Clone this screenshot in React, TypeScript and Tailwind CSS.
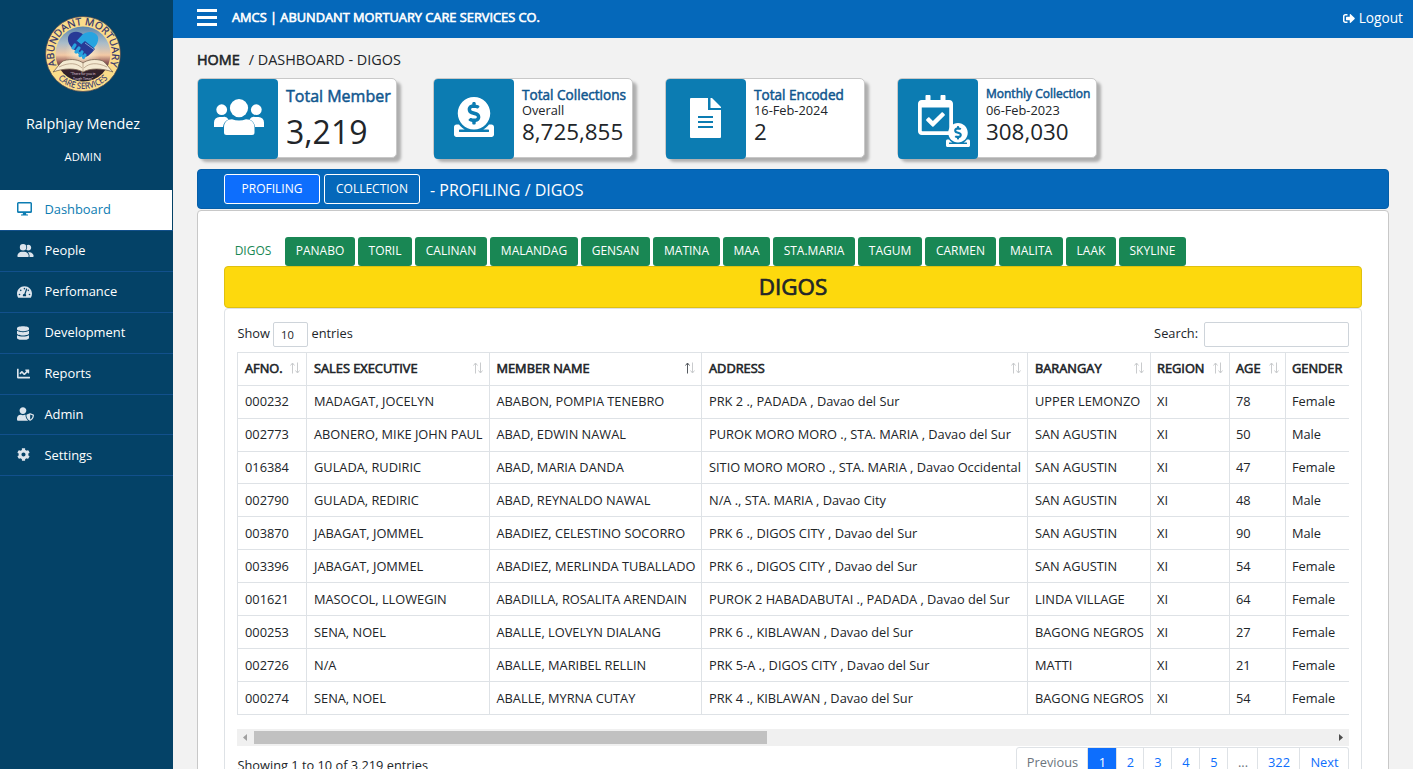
import React from "react";
import {
  FaChartLine,
  FaCog,
  FaDatabase,
  FaDonate,
  FaRegCalendarCheck,
  FaSignOutAlt,
  FaTachometerAlt,
  FaUserShield,
} from "react-icons/fa";
import { FaUserGroup } from "react-icons/fa6";

const nav = [
  { label: "People", icon: <FaUserGroup className="h-[13px] w-[17px]" />, h: "h-[41px]", pad: "pb-[3px]" },
  { label: "Perfomance", icon: <FaTachometerAlt className="h-[14px] w-[15px]" />, h: "h-[41px]", pad: "pb-[3px]" },
  { label: "Development", icon: <FaDatabase className="h-[14px] w-[12px]" />, h: "h-[41px]", pad: "pb-[3px]" },
  { label: "Reports", icon: <FaChartLine className="h-[13px] w-[13px]" />, h: "h-[41px]", pad: "pb-[3px]" },
  { label: "Admin", icon: <FaUserShield className="h-[14px] w-[17px]" />, h: "h-[40px]", pad: "pb-px" },
  { label: "Settings", icon: <FaCog className="h-[13px] w-[13px]" />, h: "h-[41px]", pad: "pb-px" },
];

const tabs: [string, string][] = [
  ["PANABO", "w-[70px]"],
  ["TORIL", "w-[54px]"],
  ["CALINAN", "w-[72px]"],
  ["MALANDAG", "w-[88px]"],
  ["GENSAN", "w-[69px]"],
  ["MATINA", "w-[67px]"],
  ["MAA", "w-[47px]"],
  ["STA.MARIA", "w-[82px]"],
  ["TAGUM", "w-[64px]"],
  ["CARMEN", "w-[71px]"],
  ["MALITA", "w-[64px]"],
  ["LAAK", "w-[50px]"],
  ["SKYLINE", "w-[67px]"],
];

const columns: [string, string][] = [
  ["AFNO.", "w-[69px] pl-[7px]"],
  ["SALES EXECUTIVE", "w-[183px] pl-[7px]"],
  ["MEMBER NAME", "w-[212px] pl-[6.5px]"],
  ["ADDRESS", "w-[326px] pl-[7px]"],
  ["BARANGAY", "w-[123px] pl-[7px]"],
  ["REGION", "w-[79px] pl-[6px]"],
  ["AGE", "w-[56px] pl-[6px]"],
  ["GENDER", "w-[80px] pl-[6px]"],
];

const rows = [
  ["000232", "MADAGAT, JOCELYN", "ABABON, POMPIA TENEBRO", "PRK 2 ., PADADA , Davao del Sur", "UPPER LEMONZO", "XI", "78", "Female"],
  ["002773", "ABONERO, MIKE JOHN PAUL", "ABAD, EDWIN NAWAL", "PUROK MORO MORO ., STA. MARIA , Davao del Sur", "SAN AGUSTIN", "XI", "50", "Male"],
  ["016384", "GULADA, RUDIRIC", "ABAD, MARIA DANDA", "SITIO MORO MORO ., STA. MARIA , Davao Occidental", "SAN AGUSTIN", "XI", "47", "Female"],
  ["002790", "GULADA, REDIRIC", "ABAD, REYNALDO NAWAL", "N/A ., STA. MARIA , Davao City", "SAN AGUSTIN", "XI", "48", "Male"],
  ["003870", "JABAGAT, JOMMEL", "ABADIEZ, CELESTINO SOCORRO", "PRK 6 ., DIGOS CITY , Davao del Sur", "SAN AGUSTIN", "XI", "90", "Male"],
  ["003396", "JABAGAT, JOMMEL", "ABADIEZ, MERLINDA TUBALLADO", "PRK 6 ., DIGOS CITY , Davao del Sur", "SAN AGUSTIN", "XI", "54", "Female"],
  ["001621", "MASOCOL, LLOWEGIN", "ABADILLA, ROSALITA ARENDAIN", "PUROK 2 HABADABUTAI ., PADADA , Davao del Sur", "LINDA VILLAGE", "XI", "64", "Female"],
  ["000253", "SENA, NOEL", "ABALLE, LOVELYN DIALANG", "PRK 6 ., KIBLAWAN , Davao del Sur", "BAGONG NEGROS", "XI", "27", "Female"],
  ["002726", "N/A", "ABALLE, MARIBEL RELLIN", "PRK 5-A ., DIGOS CITY , Davao del Sur", "MATTI", "XI", "21", "Female"],
  ["000274", "SENA, NOEL", "ABALLE, MYRNA CUTAY", "PRK 4 ., KIBLAWAN , Davao del Sur", "BAGONG NEGROS", "XI", "54", "Female"],
];

const rowSize = (i: number) => (i < 2 ? "h-[33px] pb-[3px]" : i === 2 ? "h-[32px] pb-[2px]" : "h-[33px] pb-px");

const pages: [string, string][] = [
  ["Previous", "w-[72px] rounded-l-[3px] border-l text-[#6c757d]"],
  ["1", "w-[29px] bg-[#0d6efd] border-[#0d6efd] text-white"],
  ["2", "w-[27px] text-[#0d6efd]"],
  ["3", "w-[28px] text-[#0d6efd]"],
  ["4", "w-[28px] text-[#0d6efd]"],
  ["5", "w-[28px] text-[#0d6efd]"],
  ["...", "w-[30px] text-[#6c757d]"],
  ["322", "w-[42px] text-[#0d6efd]"],
  ["Next", "w-[49px] rounded-r-[3px] text-[#0d6efd]"],
];

function Logo() {
  return (
    <svg viewBox="0 0 76 76" className="h-[76px] w-[76px]">
      <defs>
        <linearGradient id="sky" x1="0" y1="0" x2="0" y2="1">
          <stop offset="0" stopColor="#5c86ad" />
          <stop offset="0.3" stopColor="#a9bcc9" />
          <stop offset="0.52" stopColor="#f3c9a5" />
          <stop offset="0.64" stopColor="#9b6560" />
          <stop offset="0.78" stopColor="#38222b" />
          <stop offset="1" stopColor="#201d2b" />
        </linearGradient>
        <radialGradient id="glow">
          <stop offset="0" stopColor="#fff3cf" />
          <stop offset="1" stopColor="#fff3cf" stopOpacity="0" />
        </radialGradient>
        <path id="arcTop" d="M11.7 50.3 A29 29 0 1 1 64.3 50.3" />
        <path id="arcBottom" d="M7.7 55.5 A35 35 0 0 0 68.3 55.5" />
      </defs>
      <circle cx="38" cy="38" r="37.5" fill="#fbdc8a" stroke="#4a4652" strokeWidth="0.8" />
      <circle cx="38" cy="38" r="27.5" fill="url(#sky)" />
      <circle cx="38" cy="37" r="18" fill="url(#glow)" />
      <text fill="#2b2e6b" fontFamily="Open Sans" fontSize="10" stroke="#2b2e6b" strokeWidth="0.2">
        <textPath href="#arcTop" startOffset="50%" textAnchor="middle" textLength="114" lengthAdjust="spacingAndGlyphs">ABUNDANT MORTUARY</textPath>
      </text>
      <text fill="#2b2e6b" fontFamily="Open Sans" fontSize="8.6" stroke="#2b2e6b" strokeWidth="0.1">
        <textPath href="#arcBottom" startOffset="50%" textAnchor="middle" textLength="55" lengthAdjust="spacingAndGlyphs">CARE SERVICES</textPath>
      </text>
      <path d="M38 18.5 C34 14.5 26 15 23.5 20 C21.5 25 25 30 28 33 L39 40 L44 35 Z" fill="#273a96" />
      <path d="M37.5 18.5 C42 14.5 51 15 53 21 C54 26 51 30 47 34 L38 42 L31 36 L36 28 L31.5 25 Z" fill="#27a4e0" />
      <path d="M32 25 L36 28.5 L40 25 L50 33 L47 36.5 L43 40 L40.5 41 L31 33 Z" fill="#273a96" />
      <g stroke="#27a4e0" strokeWidth="3.2" strokeLinecap="round">
        <path d="M28 32 L30 29 M31 36 L34 32 M35 39.5 L37 36 M38.5 41.5 L40 39" />
      </g>
      <path d="M40 27 L49 33.5" stroke="#bfe6fa" strokeWidth="0.6" />
      <path d="M8 56 C12 52 14 48 18 45 C27 42 34 44 38 47 C42 44 50 42 58 45 C62 48 64 52 68 56 C57 52 45 52 38 56 C31 52 19 52 8 56 Z" fill="#f4ead2" stroke="#77624f" strokeWidth="0.8" />
      <path d="M38 47 V55 M14 51 C24 46 32 47 37 52 M62 51 C52 46 44 47 39 52" fill="none" stroke="#9c8166" strokeWidth="0.6" />
      <text x="38" y="59.4" textAnchor="middle" fill="#e9dfe0" fontFamily="Open Sans" fontSize="3.2">"There for you in</text>
      <text x="38" y="63.8" textAnchor="middle" fill="#e9dfe0" fontFamily="Open Sans" fontSize="3.2">Tough Times"</text>
    </svg>
  );
}

function MonitorIcon() {
  return (
    <svg viewBox="0 0 15 14" className="h-[14px] w-[15px]" fill="currentColor">
      <path fillRule="evenodd" d="M1.5 0 H13.5 A1.5 1.5 0 0 1 15 1.5 V9.5 A1.5 1.5 0 0 1 13.5 11 H1.5 A1.5 1.5 0 0 1 0 9.5 V1.5 A1.5 1.5 0 0 1 1.5 0 Z M1.5 1.5 V9.3 H13.5 V1.5 Z" />
      <path d="M6 11 H9 L9.4 12.5 H11 V13.6 H4 V12.5 H5.6 Z" />
    </svg>
  );
}

function PeopleIcon() {
  return (
    <svg viewBox="0 0 50 36" className="h-[36px] w-[50px]" fill="currentColor">
      <circle cx="7.7" cy="10.7" r="5.4" />
      <circle cx="42.3" cy="10.7" r="5.4" />
      <path d="M0 28 V23.5 A5.5 5.5 0 0 1 5.5 18 H9 A5 5 0 0 1 14.5 20.5 C11 22 9.5 24.5 9 28 Z" />
      <path d="M50 28 V23.5 A5.5 5.5 0 0 0 44.5 18 H41 A5 5 0 0 0 35.5 20.5 C39 22 40.5 24.5 41 28 Z" />
      <circle cx="25" cy="9.1" r="9.1" />
      <path d="M10 33.5 V28.5 C10 23.5 13 20.3 18 20.3 C22.5 22 27.5 22 32 20.3 C37 20.3 40.5 23.5 40.5 28.5 V33.5 A2.5 2.5 0 0 1 38 36 H12.5 A2.5 2.5 0 0 1 10 33.5 Z" />
    </svg>
  );
}

function FileIcon() {
  return (
    <svg viewBox="0 0 31 40" className="h-[40px] w-[31px]" fill="currentColor">
      <path
        fillRule="evenodd"
        d="M1 0 H18 V12 H31 V39 A1 1 0 0 1 30 40 H1 A1 1 0 0 1 0 39 V1 A1 1 0 0 1 1 0 Z M8 18 V20 H23 V18 Z M8 23 V25 H23 V23 Z M8 28 V30 H23 V28 Z"
      />
      <path d="M20.5 0 H22 L31 9 V10 H20.5 Z" />
    </svg>
  );
}

function SortIcon({ active }: { active: boolean }) {
  return (
    <svg viewBox="0 0 10 12" className="h-[12px] w-[10px] shrink-0" fill="none" strokeWidth="1">
      <path d="M2.5 11.5 V1 M0.5 3.5 L2.5 1 L4.5 3.5" stroke={active ? "#555a5f" : "#c9cbcd"} />
      <path d="M7.5 0.5 V11 M5.5 8.5 L7.5 11 L9.5 8.5" stroke="#c9cbcd" />
    </svg>
  );
}

function StatCard({ icon, children, width }: { icon: React.ReactNode; children: React.ReactNode; width: string }) {
  return (
    <div className={`${width} flex h-[80px] rounded-[5px] border border-[#c8c8c8] bg-white shadow-[4px_4px_3px_rgba(0,0,0,0.28)]`}>
      <div className="flex h-[80px] w-[80px] shrink-0 items-center justify-center rounded-[4px] bg-[#0c7cb2] text-white">{icon}</div>
      <div className="flex flex-col whitespace-nowrap pl-2">{children}</div>
    </div>
  );
}

const cardTitle = "text-[#11578f] [-webkit-text-stroke:0.5px_#11578f]";

export default function App() {
  return (
    <div className="flex h-[769px] w-[1413px] overflow-hidden bg-[#f2f2f2] font-['Open_Sans',sans-serif] text-[12.8px] leading-[20px] text-[#212529]">
      <aside className="flex w-[173px] shrink-0 flex-col bg-[#044267] text-white">
        <div className="flex h-[190px] flex-col items-center pr-[7px] pt-4">
          <Logo />
          <div className="mt-[22px] text-[14.4px]">Ralphjay Mendez</div>
          <div className="mt-[13px] text-[11.2px]">ADMIN</div>
        </div>
        <div className="h-[41px] border-b border-[#12508c]">
          <div className="flex h-[40px] w-[172px] items-center bg-white pl-[17px] text-[12.9px] text-[#0c7cb2]">
            <div className="w-[27.4px] pb-[2px]"><MonitorIcon /></div>
            <span className="pb-[3px]">Dashboard</span>
          </div>
        </div>
        {nav.map((n) => (
          <div key={n.label} className={`${n.h} flex items-center border-b border-[#12508c] pl-[17px] text-[12.9px]`}>
            <div className="w-[27.4px] pb-px text-[#dce4ec]">{n.icon}</div>
            <span className={n.pad}>{n.label}</span>
          </div>
        ))}
      </aside>

      <main className="flex w-[1240px] flex-col">
        <header className="flex h-[38px] shrink-0 items-center bg-[#0568ba] pb-[2px] pl-6 pr-[10px] text-white">
          <div className="flex w-[35px] flex-col gap-[4px] pb-px">
            <div className="h-[3px] w-[20px] bg-white" />
            <div className="h-[3px] w-[20px] bg-white" />
            <div className="h-[3px] w-[20px] bg-white" />
          </div>
          <div className="pb-[2px] text-[12.8px] [-webkit-text-stroke:0.6px_white]">AMCS | ABUNDANT MORTUARY CARE SERVICES CO.</div>
          <div className="ml-auto flex items-center gap-1 text-[13.7px]">
            <FaSignOutAlt className="h-[13px] w-[12px]" />
            Logout
          </div>
        </header>

        <div className="flex flex-col pl-6">
          <div className="mt-3 flex h-[20px] items-center text-[14.4px]">
            <span className="[-webkit-text-stroke:0.6px_#212529]">HOME</span>
            <span className="ml-[9px]">/ DASHBOARD - DIGOS</span>
          </div>

          <div className="mt-2 flex h-[91px]">
            <StatCard width="w-[200px] mr-[36px]" icon={<div className="pb-[4px] pl-[2px]"><PeopleIcon /></div>}>
              <div className={`mt-[7px] text-[16px] ${cardTitle}`}>Total Member</div>
              <div className="mt-[6px] text-[32px] leading-[40px]">3,219</div>
            </StatCard>
            <StatCard width="w-[200px] mr-[32px]" icon={<div className="pb-[4px]"><FaDonate className="h-[40px] w-[40px]" /></div>}>
              <div className={`mt-[8px] text-[13.6px] leading-[16px] ${cardTitle}`}>Total Collections</div>
              <div className="text-[12.8px] leading-[15px]">Overall</div>
              <div className="text-[22.4px] leading-[27px]">8,725,855</div>
            </StatCard>
            <StatCard width="w-[200px] mr-[32px]" icon={<div className="pb-[2px] pr-[2px]"><FileIcon /></div>}>
              <div className={`mt-[8px] text-[13.6px] leading-[16px] ${cardTitle}`}>Total Encoded</div>
              <div className="text-[12.8px] leading-[15px]">16-Feb-2024</div>
              <div className="text-[22.4px] leading-[27px]">2</div>
            </StatCard>
            <StatCard
              width="w-[200px]"
              icon={
                <div className="relative flex h-[80px] w-[80px] pl-5 pt-4">
                  <FaRegCalendarCheck className="h-[40px] w-[35px]" />
                  <FaDonate className="absolute left-[48px] top-[44px] h-[24px] w-[24px]" />
                </div>
              }
            >
              <div className={`mt-[7px] text-[12px] leading-[16px] ${cardTitle}`}>Monthly Collection</div>
              <div className="mt-px text-[12.8px] leading-[15px]">06-Feb-2023</div>
              <div className="text-[22.4px] leading-[27px]">308,030</div>
            </StatCard>
          </div>

          <div className="flex h-[40px] w-[1192px] items-center rounded-[4px] border border-[#055ea8] bg-[#0568ba] pl-[26px] text-white">
            <div className="flex h-[30px] w-[96px] items-center justify-center rounded-[3px] border border-white bg-[#0d6efd] text-[12px]">PROFILING</div>
            <div className="ml-1 flex h-[30px] w-[96px] items-center justify-center rounded-[3px] border border-white text-[12px]">COLLECTION</div>
            <div className="ml-[10px] pt-px text-[16px]">- PROFILING / DIGOS</div>
          </div>

          <section className="mt-px flex h-[600px] w-[1192px] flex-col rounded-[4px] border border-[#c8c8c8] bg-white px-[26px] pt-[26px]">
            <div className="flex h-[29px] shrink-0 gap-[3px] text-[12px] text-white">
              <div className="flex h-[28px] w-[58px] items-center justify-center text-[#198754]">DIGOS</div>
              {tabs.map(([t, w]) => (
                <div key={t} className={`${w} flex h-[29px] shrink-0 items-center justify-center rounded-[3px] bg-[#198754] pb-px`}>{t}</div>
              ))}
            </div>
            <div className="flex h-[42px] w-[1138px] shrink-0 items-center justify-center rounded-[4px] border border-[#dfc010] bg-[#fdd90d] text-[22.4px]">
              <span className="[-webkit-text-stroke:0.7px_#212529]">DIGOS</span>
            </div>
            <div className="flex h-[520px] w-[1138px] flex-col rounded-[4px] border border-[#dee2e6] px-3 pt-[13px]">
              <div className="flex h-[25px] items-center">
                <span className="pb-[3px] pl-[0.5px]">Show</span>
                <div className="ml-[3px] flex h-[25px] w-[35px] items-center rounded-[2px] border border-[#ced4da] pl-[7px] text-[11.2px]">10</div>
                <span className="ml-[3.5px] pb-[3px]">entries</span>
                <span className="ml-auto pb-[3px]">Search:</span>
                <div className="ml-[6px] h-[25px] w-[145px] rounded-[2px] border border-[#ced4da]" />
              </div>
              <div className="mt-[5px] h-[363px] w-[1112px] overflow-hidden">
                <div className="w-[1128px] border-l border-t border-[#dee2e6]">
                  <div className="flex">
                    {columns.map(([c, w]) => (
                      <div key={c} className={`${w} flex h-[33px] shrink-0 items-center justify-between border-b border-r border-[#dee2e6] pb-[3px] pr-[6px]`}>
                        <span className="[-webkit-text-stroke:0.6px_#212529]">{c}</span>
                        {c !== "GENDER" && <SortIcon active={c === "MEMBER NAME"} />}
                      </div>
                    ))}
                  </div>
                  {rows.map((r, ri) => (
                    <div key={r[0]} className="flex">
                      {r.map((v, i) => (
                        <div key={i} className={`${columns[i][1]} ${rowSize(ri)} flex shrink-0 items-center whitespace-nowrap border-b border-r border-[#dee2e6]`}>{v}</div>
                      ))}
                    </div>
                  ))}
                </div>
              </div>
              <div className="mt-[14px] flex h-[17px] w-[1112px] items-center justify-between bg-[#f0f0f0]">
                <div className="flex items-center">
                  <svg viewBox="0 0 17 17" className="h-[17px] w-[17px]"><path d="M10 5 V12 L6 8.5 Z" fill="#a0a0a0" /></svg>
                  <div className="h-[13px] w-[513px] bg-[#c1c1c1]" />
                </div>
                <svg viewBox="0 0 17 17" className="h-[17px] w-[17px]"><path d="M7 5 V12 L11 8.5 Z" fill="#4d4d4d" /></svg>
              </div>
              <div className="flex justify-between">
                <div className="mt-[9px] pl-[0.5px]">Showing 1 to 10 of 3,219 entries</div>
                <div className="mt-px flex">
                  {pages.map(([p, cls]) => (
                    <div key={p} className={`${cls} flex h-[31px] items-center justify-center border-y border-r border-[#dee2e6] pb-px pl-px`}>{p}</div>
                  ))}
                </div>
              </div>
            </div>
          </section>
        </div>
      </main>
    </div>
  );
}
